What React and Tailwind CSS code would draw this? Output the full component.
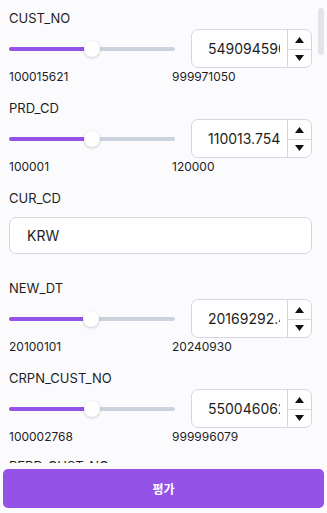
import React from "react";

const fields = [
  { type: "slider", label: "CUST_NO", min: 100015621, max: 999971050, value: "549094590", num: 549094590 },
  { type: "slider", label: "PRD_CD", min: 100001, max: 120000, value: "110013.754", num: 110013.754 },
  { type: "text", label: "CUR_CD", value: "KRW" },
  { type: "slider", label: "NEW_DT", min: 20100101, max: 20240930, value: "20169292.4", num: 20169292.4 },
  { type: "slider", label: "CRPN_CUST_NO", min: 100002768, max: 999996079, value: "550046062", num: 550046062 },
  { type: "slider", label: "PERD_CUST_NO", min: 100000000, max: 999999999, value: "550000000", num: 550000000, last: true },
];

function Up() {
  return (
    <svg width="9" height="6" viewBox="0 0 9 6">
      <path d="M4.5 0L9 6H0Z" fill="#111" />
    </svg>
  );
}
function Down() {
  return (
    <svg width="9" height="6" viewBox="0 0 9 6">
      <path d="M0 0H9L4.5 6Z" fill="#111" />
    </svg>
  );
}

function SliderField({ f }) {
  const frac = (f.num - f.min) / (f.max - f.min);
  const center = 8 + frac * 150;
  return (
    <div className={f.last ? "flex flex-col -mt-[2px]" : "flex flex-col"}>
      <div className="h-[20px] leading-[20px] text-[13px] text-[#1e1e1e]">{f.label}</div>
      <div className="mt-[1px] flex items-center h-[39px]">
        <div className="relative w-[166px] h-[16px] flex items-center">
          <div className="w-full h-[4px] rounded-full bg-[#cbd3df] overflow-hidden">
            <div className="h-full bg-[#9354e6]" style={{ width: center + "px" }} />
          </div>
          <div
            className="absolute top-0 w-[16px] h-[16px] rounded-full bg-white shadow-[0_1px_3px_rgba(0,0,0,0.2)]"
            style={{ left: center - 8 + "px" }}
          />
        </div>
        <div className="ml-[16px] w-[121px] h-[39px] flex rounded-[7px] border border-[#d2d7e0] bg-white overflow-hidden">
          <div className="flex-1 min-w-0 overflow-hidden pl-[16px] pr-[7px] flex items-center">
            <span className="text-[14px] text-[#1e1e1e] whitespace-nowrap block overflow-hidden">{f.value}</span>
          </div>
          <div className="w-[24px] flex flex-col border-l border-[#d2d7e0]">
            <div className="flex-1 flex items-center justify-center pt-[1px]"><Up /></div>
            <div className="flex-1 flex items-center justify-center border-t border-[#d2d7e0]"><Down /></div>
          </div>
        </div>
      </div>
      <div className="mt-[1px] h-[16px] leading-[16px] flex text-[12px] text-[#1e1e1e]">
        <span className="w-[163px]">{f.min}</span>
        <span>{f.max}</span>
      </div>
    </div>
  );
}

function TextField({ f }) {
  return (
    <div className="flex flex-col mb-[11px]">
      <div className="h-[20px] leading-[20px] text-[13px] text-[#1e1e1e]">{f.label}</div>
      <div className="mt-[9px] w-[303px] h-[37px] rounded-[7px] border border-[#d2d7e0] bg-white flex items-center pl-[17px] text-[14px] text-[#1e1e1e]">
        {f.value}
      </div>
    </div>
  );
}

export default function App() {
  return (
    <div
      className="relative w-[327px] h-[513px] bg-[#fbfbfe] overflow-hidden flex flex-col"
      style={{ fontFamily: "Inter, 'Noto Sans CJK KR', sans-serif" }}
    >
      <div className="h-[463px] overflow-hidden pl-[9px] pt-[8px] flex flex-col gap-[13px]">
        {fields.map((f) =>
          f.type === "slider" ? <SliderField key={f.label} f={f} /> : <TextField key={f.label} f={f} />
        )}
      </div>
      <div className="absolute right-[3px] top-[8px] w-[6px] h-[47px] rounded-full bg-[#e3e3e9]" />
      <div className="mt-[6px] px-[3px]">
        <button
          className="w-full h-[39px] rounded-[5px] bg-[#9453e6] text-white text-[12px] font-semibold flex items-center justify-center"
          style={{ fontFamily: "'Noto Sans CJK KR', Inter, sans-serif" }}
        >
          평가
        </button>
      </div>
    </div>
  );
}
